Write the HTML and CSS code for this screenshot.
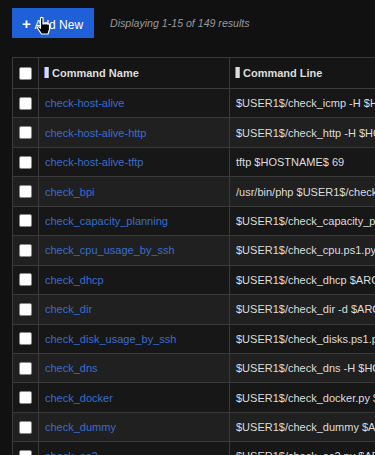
FILE: index.html
```html
<!DOCTYPE html>
<html lang="en">
<head>
  <meta charset="UTF-8" />
  <meta name="viewport" content="width=device-width, initial-scale=1.0" />
  <title>Commands</title>
  <link rel="stylesheet" href="styles.css">
</head>
<body>
  <div class="toolbar">
    <button class="btn-add" type="button"><span class="plus">+</span> Add New</button>
    <span class="summary">Displaying 1-15 of 149 results</span>
    <!-- mouse pointer over the button -->
    <svg class="pointer" width="16" height="20" viewBox="0 0 16 20">
      <path d="M4.5 2 Q5.75 0.8 7 2 V8 H7.6 Q8.6 7.2 9.6 8 Q10.6 7.3 11.6 8.1 Q12.8 7.6 13.5 8.8 V13.5 L12 18 H5.5 L1.5 12.2 Q1.3 10.4 3 10.8 L4.5 12.3 Z" fill="#000" stroke="#fff" stroke-width="1.2" stroke-linejoin="round"/>
    </svg>
  </div>

  <!-- Commands table -->
  <table class="grid">
    <thead>
      <tr>
        <th class="col-check"><span class="box"></span></th>
        <th class="col-name"><span class="sort"></span>Command Name</th>
        <th class="col-line"><span class="sort"></span>Command Line</th>
      </tr>
    </thead>
    <tbody>
      <tr><td class="col-check"><span class="box"></span></td><td><a href="#">check-host-alive</a></td><td>$USER1$/check_icmp -H $HOSTADDRESS$ -w 3000.0,80% -c 5000.0,100% -p 5</td></tr>
      <tr><td class="col-check"><span class="box"></span></td><td><a href="#">check-host-alive-http</a></td><td>$USER1$/check_http -H $HOSTADDRESS$</td></tr>
      <tr><td class="col-check"><span class="box"></span></td><td><a href="#">check-host-alive-tftp</a></td><td>tftp $HOSTNAME$ 69</td></tr>
      <tr><td class="col-check"><span class="box"></span></td><td><a href="#">check_bpi</a></td><td>/usr/bin/php $USER1$/check_bpi.php $ARG1$</td></tr>
      <tr><td class="col-check"><span class="box"></span></td><td><a href="#">check_capacity_planning</a></td><td>$USER1$/check_capacity_planning.php $ARG1$</td></tr>
      <tr><td class="col-check"><span class="box"></span></td><td><a href="#">check_cpu_usage_by_ssh</a></td><td>$USER1$/check_cpu.ps1.py $ARG1$</td></tr>
      <tr><td class="col-check"><span class="box"></span></td><td><a href="#">check_dhcp</a></td><td>$USER1$/check_dhcp $ARG1$</td></tr>
      <tr><td class="col-check"><span class="box"></span></td><td><a href="#">check_dir</a></td><td>$USER1$/check_dir -d $ARG1$</td></tr>
      <tr><td class="col-check"><span class="box"></span></td><td><a href="#">check_disk_usage_by_ssh</a></td><td>$USER1$/check_disks.ps1.py $ARG1$</td></tr>
      <tr><td class="col-check"><span class="box"></span></td><td><a href="#">check_dns</a></td><td>$USER1$/check_dns -H $HOSTADDRESS$</td></tr>
      <tr><td class="col-check"><span class="box"></span></td><td><a href="#">check_docker</a></td><td>$USER1$/check_docker.py $ARG1$</td></tr>
      <tr><td class="col-check"><span class="box"></span></td><td><a href="#">check_dummy</a></td><td>$USER1$/check_dummy $ARG1$</td></tr>
      <tr><td class="col-check"><span class="box"></span></td><td><a href="#">check_ec2</a></td><td>$USER1$/check_ec2.py $ARG1$</td></tr>
    </tbody>
  </table>
</body>
</html>
```

FILE: styles.css
```css
body {
  margin: 0;
  padding: 8px 12px;
  background-color: #111;
  color: #ddd;
  font-family: "Liberation Sans", Arial, sans-serif;
  font-size: 11px;
  overflow: hidden;
}
.toolbar {
  position: relative;
  display: flex;
  align-items: center;
  gap: 16px;
  height: 30px;
  margin-bottom: 19px;
}
.btn-add {
  height: 30px;
  width: 82px;
  padding: 0 10px;
  border: none;
  background-color: #1f5fd8;
  color: #fff;
  font-family: inherit;
  font-size: 12px;
  text-align: left;
}
.btn-add .plus {
  font-weight: bold;
  font-size: 15px;
  margin-right: 1px;
}
.summary {
  color: #999;
  font-style: italic;
  font-size: 10.6px;
}
.pointer {
  position: absolute;
  left: 24px;
  top: 8px;
}
.grid {
  width: 620px;
  border-collapse: collapse;
  table-layout: fixed;
}
.grid th, .grid td {
  border: 1px solid #3a3a3a;
  height: 28.45px;
  padding: 0 6px;
  text-align: left;
  white-space: nowrap;
  overflow: hidden;
}
.grid th {
  height: 29px;
  padding-bottom: 1px;
  background-color: #151515;
  color: #ddd;
  font-weight: bold;
}
.grid tbody tr:nth-child(odd) td {
  background-color: #171717;
}
.grid tbody tr:nth-child(even) td {
  background-color: #202020;
}
.col-check {
  width: 13px;
}
.col-name {
  width: 178px;
}
.col-line {
  width: 390px;
}
.grid th.col-check, .grid td.col-check {
  padding: 0 6px;
}
.box {
  display: block;
  width: 11px;
  height: 11px;
  background-color: #fff;
  border: 1px solid #888;
  border-radius: 2px;
}
.sort {
  display: inline-block;
  width: 3px;
  height: 11px;
  margin-right: 4px;
  vertical-align: -1px;
  background-color: #ddd;
  box-shadow: -1px 0 0 #6a7ad8, 1px 0 0 #aaa;
}
a {
  color: #3a6dcc;
  text-decoration: none;
}
```
